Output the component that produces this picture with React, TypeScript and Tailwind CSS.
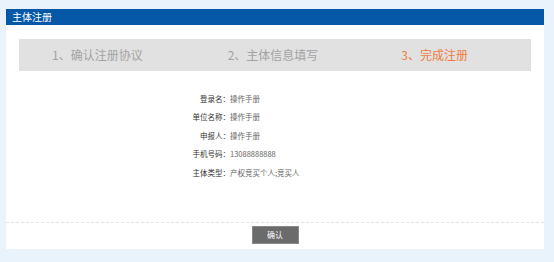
const rows = [
  { label: "登录名：", value: "操作手册" },
  { label: "单位名称：", value: "操作手册" },
  { label: "申报人：", value: "操作手册" },
  { label: "手机号码：", value: "13088888888" },
  { label: "主体类型：", value: "产权竞买个人;竞买人" },
];

export default function App() {
  return (
    <div
      className="w-[554px] h-[262px] bg-[#e8f3fc] pt-[9px] pl-[6px] overflow-hidden"
      style={{ fontFamily: '"Microsoft YaHei", "Noto Sans CJK SC", "Noto Sans", sans-serif' }}
    >
      <div className="w-[538px] h-[240px] bg-white flex flex-col overflow-hidden">
        {/* Header */}
        <div className="h-[16px] bg-[#0558a8] text-white text-[10px] leading-[16px] pl-[6px]">
          主体注册
        </div>

        {/* Steps */}
        <div className="mt-[14px] mx-[13px] h-[32px] bg-[#e1e1e1] flex items-center gap-[85px] pl-[33px] text-[12px]">
          <span className="text-[#a3a3a3]">1、确认注册协议</span>
          <span className="text-[#a3a3a3]">2、主体信息填写</span>
          <span className="text-[#f07b3f] -ml-[2px]">3、完成注册</span>
        </div>

        {/* Info */}
        <div className="mt-[18px] ml-[174px] flex flex-col">
          {rows.map((r) => (
            <div key={r.label} className="flex h-[18.5px] items-center text-[7.5px]">
              <span className="w-[50px] text-right text-[#333]">{r.label}</span>
              <span className="text-[#666]">{r.value}</span>
            </div>
          ))}
        </div>

        <div className="flex-1" />

        {/* Footer */}
        <div className="border-t border-dashed border-[#e3e3e3] h-[27px] flex justify-center pt-[3px]">
          <button className="w-[47px] h-[18px] bg-[#6b6b6b] border border-[#8a8a8a] text-white text-[8px] leading-none">
            确认
          </button>
        </div>
      </div>
    </div>
  );
}
